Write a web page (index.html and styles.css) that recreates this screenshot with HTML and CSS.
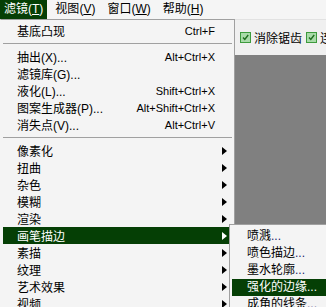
FILE: index.html
```html
<!DOCTYPE html>
<html>
<head>
<meta charset="utf-8">
<link rel="stylesheet" href="styles.css">
</head>
<body>
<div class="app">
  <div class="menubar">
    <div class="mitem active">滤镜<span class="acc">(<u>T</u>)</span></div>
    <div class="mitem">视图<span class="acc">(<u>V</u>)</span></div>
    <div class="mitem">窗口<span class="acc">(<u>W</u>)</span></div>
    <div class="mitem">帮助<span class="acc">(<u>H</u>)</span></div>
  </div>
  <div class="toolbar">
    <div class="tsep"></div>
    <div class="check">
      <svg class="box" width="11" height="11" viewBox="0 0 11 11"><rect x="0.5" y="0.5" width="10" height="10" fill="#a9dba9" stroke="#3d9b3d"/><path d="M3 5.5 L4.8 7.5 L8.2 3" fill="none" stroke="#1f6e1f" stroke-width="1.4"/></svg>
      <span>消除锯齿</span>
    </div>
    <div class="check">
      <svg class="box" width="11" height="11" viewBox="0 0 11 11"><rect x="0.5" y="0.5" width="10" height="10" fill="#a9dba9" stroke="#3d9b3d"/><path d="M3 5.5 L4.8 7.5 L8.2 3" fill="none" stroke="#1f6e1f" stroke-width="1.4"/></svg>
      <span>连续</span>
    </div>
  </div>
  <div class="canvas"></div>

  <div class="dropdown">
    <div class="item"><span class="label">基底凸现</span><span class="sc">Ctrl+F</span><span class="arr"></span></div>
    <div class="sep"></div>
    <div class="item"><span class="label">抽出<span class="lat">(X)...</span></span><span class="sc">Alt+Ctrl+X</span><span class="arr"></span></div>
    <div class="item"><span class="label">滤镜库<span class="lat">(G)...</span></span><span class="sc"></span><span class="arr"></span></div>
    <div class="item"><span class="label">液化<span class="lat">(L)...</span></span><span class="sc">Shift+Ctrl+X</span><span class="arr"></span></div>
    <div class="item"><span class="label">图案生成器<span class="lat">(P)...</span></span><span class="sc">Alt+Shift+Ctrl+X</span><span class="arr"></span></div>
    <div class="item"><span class="label">消失点<span class="lat">(V)...</span></span><span class="sc">Alt+Ctrl+V</span><span class="arr"></span></div>
    <div class="sep"></div>
    <div class="item"><span class="label">像素化</span><span class="sc"></span><span class="arr"><i class="tri"></i></span></div>
    <div class="item"><span class="label">扭曲</span><span class="sc"></span><span class="arr"><i class="tri"></i></span></div>
    <div class="item"><span class="label">杂色</span><span class="sc"></span><span class="arr"><i class="tri"></i></span></div>
    <div class="item"><span class="label">模糊</span><span class="sc"></span><span class="arr"><i class="tri"></i></span></div>
    <div class="item"><span class="label">渲染</span><span class="sc"></span><span class="arr"><i class="tri"></i></span></div>
    <div class="item hl"><span class="label">画笔描边</span><span class="sc"></span><span class="arr"><i class="tri"></i></span></div>
    <div class="item"><span class="label">素描</span><span class="sc"></span><span class="arr"><i class="tri"></i></span></div>
    <div class="item"><span class="label">纹理</span><span class="sc"></span><span class="arr"><i class="tri"></i></span></div>
    <div class="item"><span class="label">艺术效果</span><span class="sc"></span><span class="arr"><i class="tri"></i></span></div>
    <div class="item"><span class="label">视频</span><span class="sc"></span><span class="arr"><i class="tri"></i></span></div>
  </div>

  <div class="submenu">
    <div class="sitem">喷溅<span class="dots">...</span></div>
    <div class="sitem">喷色描边<span class="dots">...</span></div>
    <div class="sitem">墨水轮廓<span class="dots">...</span></div>
    <div class="sitem hl">强化的边缘<span class="dots">...</span></div>
    <div class="sitem">成角的线条<span class="dots">...</span></div>
  </div>
</div>
</body>
</html>
```

FILE: styles.css
```css
* { box-sizing: border-box; margin: 0; padding: 0; }
html, body { width: 326px; height: 307px; overflow: hidden; background: #808080; }
body {
  font-family: "Liberation Sans", "Noto Sans CJK SC", sans-serif;
  font-size: 12px;
  color: #000;
}
.app {
  position: relative;
  width: 326px;
  height: 307px;
  display: flex;
  flex-direction: column;
  overflow: hidden;
}
.menubar {
  height: 19px;
  background: #f5f5f5;
  display: flex;
  align-items: stretch;
  flex: none;
}
.mitem {
  padding: 0 4px 0 4px;
  margin-right: 2px;
  line-height: 19px;
  white-space: nowrap;
}
.mitem + .mitem { padding-left: 4px; margin-left: 2px; }
.mitem.active { background: #053f05; color: #fff; }
.acc { font-size: 12px; }
.toolbar {
  height: 36px;
  flex: none;
  background: #f0f0f0;
  border-top: 1px solid #e2e2e2;
  display: flex;
  align-items: center;
  padding-left: 234px;
}
.tsep {
  width: 3px;
  height: 22px;
  background: #b3c9b3;
  margin-right: 6px;
}
.check {
  display: flex;
  align-items: center;
  gap: 3px;
  margin-right: 4px;
  white-space: nowrap;
  font-size: 12px;
}
.box { flex: none; }
.canvas { flex: 1; background: #808080; }

.dropdown {
  position: absolute;
  left: 0;
  top: 19px;
  width: 235px;
  background: #f4f4f4;
  border: 1px solid #a0a0a0;
  border-left-color: #f4f4f4;
  padding: 2px;
}
.item {
  height: 17px;
  display: flex;
  align-items: center;
  padding: 0 5px 0 14px;
  white-space: nowrap;
}
.item .label { flex: 1; }
.item .sc { font-size: 11px; }
.item .arr {
  width: 12px;
  display: flex;
  justify-content: flex-end;
  align-items: center;
}
.tri {
  display: block;
  width: 0;
  height: 0;
  border-top: 4px solid transparent;
  border-bottom: 4px solid transparent;
  border-left: 5px solid #000;
}
.item.hl { background: #053f05; color: #fff; }
.item.hl .tri { border-left-color: #fff; }
.lat { font-size: 12px; }
.sep {
  height: 1px;
  background: #a0a0a0;
  margin: 4px 0;
}

.submenu {
  position: absolute;
  left: 229px;
  top: 224px;
  width: 120px;
  background: #f4f4f4;
  border: 1px solid #a0a0a0;
  padding: 3px 2px 2px;
}
.sitem {
  height: 17px;
  line-height: 17px;
  padding-left: 15px;
  white-space: nowrap;
}
.sitem .dots { color: #1a1a6a; }
.sitem.hl { background: #053f05; color: #fff; }
.sitem.hl .dots { color: #fff; }
```
